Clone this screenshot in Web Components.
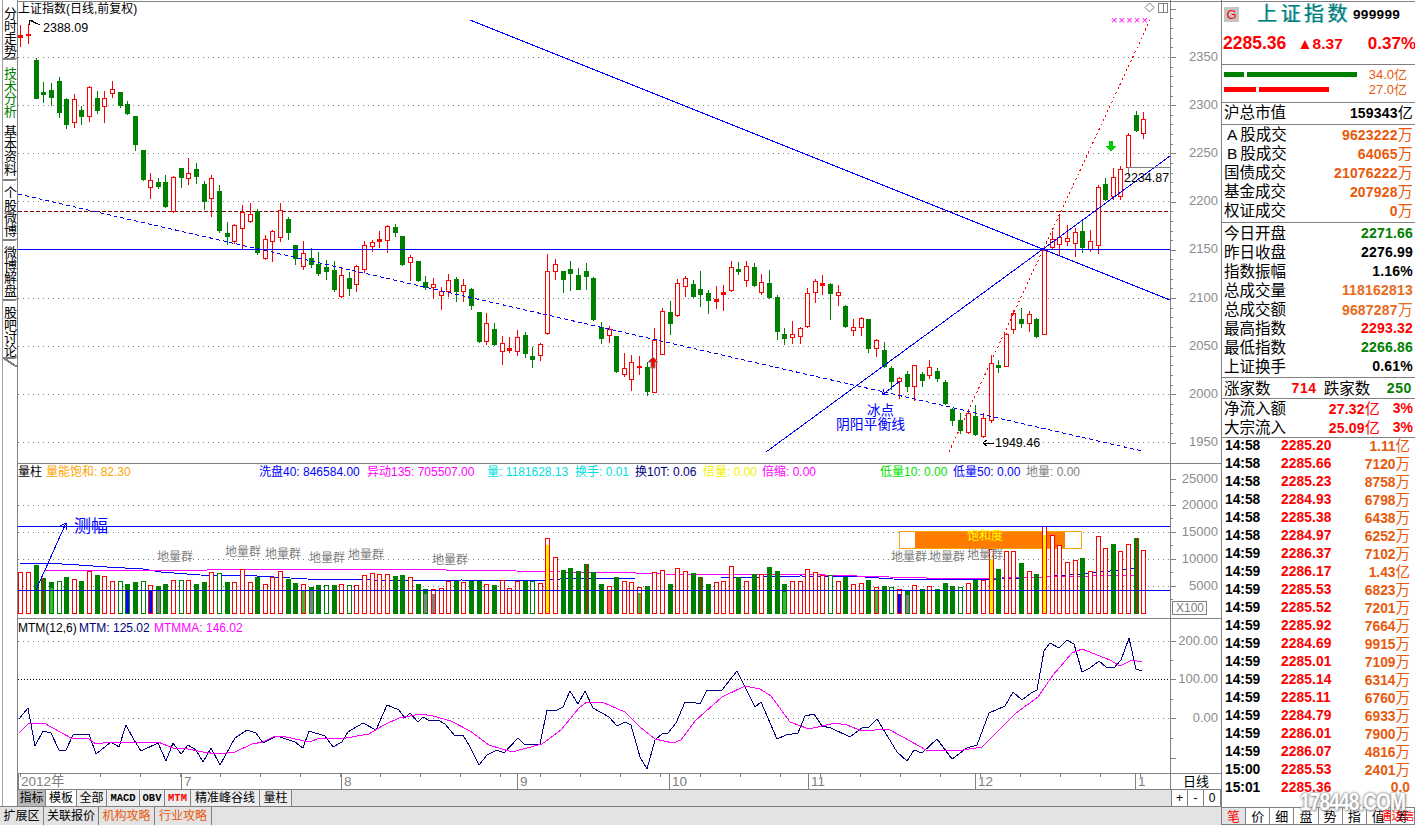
<!DOCTYPE html>
<html lang="zh">
<head>
<meta charset="utf-8">
<title>上证指数</title>
<style>
  html, body { margin: 0; padding: 0; background: #fff; }
</style>
</head>
<body>
<stock-app></stock-app>
<script>
const FONT = '"Liberation Sans", "Noto Sans CJK SC", sans-serif';
const GREY = '#808080';
const RED = '#ff0000';
const GREEN = '#008000';
const BLUE = '#0000ff';
const ORANGE = '#e8590c';

const barX = i => Math.round(20.3 + 7.64 * i);
const line = (x1, y1, x2, y2, color, extra = '') =>
  `<line x1="${x1}" y1="${y1}" x2="${x2}" y2="${y2}" stroke="${color}" ${extra}/>`;
const hLine = (y, color, extra = '', x1 = 18, x2 = 1170) => line(x1, y + 0.5, x2, y + 0.5, color, extra);
const dotted = y => hLine(y, GREY, 'stroke-dasharray="1 4"');
const rect = (x, y, w, h, color) => `<rect x="${x}" y="${y}" width="${w}" height="${h}" fill="${color}"/>`;
const polyline = (points, color) =>
  `<polyline fill="none" stroke="${color}" points="${points.map(p => p.join(',')).join(' ')}"/>`;

// color, wick top, body top, body bottom, wick bottom
const CANDLES = [
  ['r',25,35,37,46],['r',24,34,34,43],['g',58,60,98,98],['g',82,92,94,102],['g',83,90,97,105],['g',77,81,112,117],
  ['g',98,99,124,128],['r',94,99,122,127],['g',106,110,116,124],['r',86,87,116,121],['g',91,98,110,113],['r',91,98,106,122],
  ['r',81,89,93,97],['g',92,92,105,107],['g',101,104,113,114],['g',116,116,144,150],['g',150,150,179,180],['r',173,180,187,198],
  ['g',178,182,186,188],['g',175,182,206,207],['r',176,177,211,212],['g',168,168,177,187],['r',158,173,178,184],['g',163,169,176,183],
  ['g',181,184,201,209],['r',175,178,198,216],['g',185,191,230,232],['g',222,233,236,244],['r',224,225,241,243],['r',205,212,228,248],
  ['r',203,214,221,222],['g',209,211,252,254],['r',235,239,258,259],['r',230,231,241,261],['r',203,210,237,241],['g',217,219,232,239],
  ['g',245,245,258,264],['r',241,253,266,269],['g',248,258,264,267],['g',252,264,273,275],['g',260,267,271,279],['g',261,270,289,291],
  ['r',268,275,296,297],['g',272,278,288,295],['r',265,266,284,291],['r',241,245,269,272],['r',240,242,246,251],['r',231,239,241,247],
  ['r',225,226,240,252],['g',224,227,232,236],['g',236,236,264,265],['r',255,257,262,280],['g',261,261,280,281],['g',276,282,287,289],
  ['r',278,284,287,298],['r',287,291,295,309],['r',274,280,291,296],['g',277,279,291,301],['r',279,285,291,301],['g',288,289,305,309],
  ['g',312,312,341,342],['r',313,323,341,344],['g',323,329,344,345],['r',336,343,351,364],['r',337,348,350,352],['r',330,337,351,355],
  ['g',332,335,353,357],['g',347,356,359,367],['r',343,344,355,360],['r',254,271,333,334],['r',259,264,271,279],['g',271,271,279,292],
  ['g',261,269,273,290],['g',268,275,289,289],['g',263,271,276,289],['g',277,278,319,320],['g',322,327,338,343],['r',326,329,335,342],
  ['g',336,336,371,372],['r',353,368,374,376],['r',355,362,379,390],['r',356,366,366,374],['g',362,367,391,395],['r',328,340,392,392],
  ['r',308,311,354,354],['g',301,312,323,334],['r',279,283,315,316],['r',276,278,286,296],['g',280,284,296,297],['g',271,289,294,306],
  ['g',290,293,300,313],['r',286,299,301,308],['r',285,292,294,310],['r',261,267,290,291],['g',262,269,271,274],['r',261,266,280,286],
  ['g',263,267,285,286],['r',274,282,292,294],['g',270,283,297,298],['g',295,297,331,339],['g',328,334,338,344],['r',321,334,337,343],
  ['r',327,328,336,343],['r',288,293,326,327],['r',279,281,292,302],['r',275,283,285,294],['g',283,284,293,319],['r',285,292,295,305],
  ['g',305,306,326,327],['r',319,327,330,335],['r',317,318,327,335],['g',319,319,348,352],['r',339,340,348,356],['g',342,350,366,367],
  ['g',366,368,381,389],['r',377,378,381,398],['g',371,374,386,391],['r',365,365,386,400],['g',372,374,380,386],['r',360,367,375,378],
  ['g',368,371,378,381],['g',380,382,403,404],['g',408,409,420,425],['g',413,420,430,433],['r',412,413,432,433],['g',405,416,434,435],
  ['r',413,418,436,437],['r',355,363,420,422],['g',360,365,367,372],['r',333,334,366,366],['r',310,313,329,333],['g',308,319,323,327],
  ['r',311,314,323,331],['g',318,319,336,337],['r',250,250,334,334],['r',231,239,247,249],['r',216,237,244,254],['r',225,238,241,245],
  ['r',228,232,243,256],['g',220,231,247,252],['r',230,241,249,251],['r',185,187,245,253],['g',178,184,199,200],['r',168,177,196,199],
  ['r',166,169,196,199],['r',133,135,167,168],['g',111,115,130,131],['r',112,119,133,138]
];

// color, top, [inner fill, fill top]
const LIGHT = '#33bb33';
const VOLUMES = [
  ['r',572],['r',572],['g',565],['c',578],['g',582,LIGHT,588],['h',581],['g',577],['r',579],['g',581],['r',571],['g',575],['r',576],
  ['r',581],['h',581],['g',584,BLUE,590],['g',582],['h',581],['r',585,BLUE,590],['g',586,GREY,590],['g',584],['r',580],['h',580],['r',580],['g',584],
  ['g',582],['r',572],['h',573],['g',582],['r',582],['r',569],['r',582],['g',577],['r',584],['r',577],['r',571],['g',579],
  ['g',583],['r',584,LIGHT,590],['g',587,GREY,590],['g',585],['h',585],['g',585],['r',584],['h',585],['r',585],['r',575],['r',573],['r',574],
  ['r',574],['g',576],['g',575],['r',577],['g',584],['g',589,GREY,594],['r',589,GREY,594],['r',588],['r',581],['g',581],['r',582],['g',581],
  ['g',581],['r',584],['g',585],['r',580],['r',588],['r',581],['g',581],['h',581],['r',583],['r',538,'#ffee00',545],['r',557],['g',570],
  ['g',568],['g',571],['c',564],['g',572],['g',584],['r',586,'#ff6666',590],['g',577],['r',581],['r',582],['r',587,LIGHT,593],['g',586],['r',572],
  ['r',570],['g',584],['r',568],['r',571],['g',573],['c',577],['g',584],['r',582],['r',581],['r',566],['g',577],['r',581],
  ['g',574],['r',574],['g',567],['g',571],['g',584,LIGHT,592],['r',581],['r',581],['r',569],['r',572],['r',575],['h',575],['r',581],
  ['g',577],['r',584],['r',583],['g',580],['r',587,LIGHT,590],['g',586],['h',587],['r',589,BLUE,594],['g',591,GREY,595],['r',585],['g',589],['r',586],
  ['g',589],['g',583],['g',586],['h',587],['r',583],['g',580],['r',580],['r',549,'#ffee00',559],['g',569],['r',551],['r',551],['g',563],
  ['r',571],['g',574],['r',526,'#ffee00',535],['r',535],['r',545],['r',562],['r',560],['g',558],['r',571],['r',536],['r',548],['g',544],
  ['r',551],['r',544],['c',538],['r',550]
];

const MTM_LINE = [[25,313],[37,280],[47,392],[57,348],[68,353],[78,404],[88,405],[97,360],[118,357],[128,417],[148,380],[158,395],[168,330],[178,375],[188,408],[210,384],[220,437],[230,385],[240,417],[250,390],[260,405],[270,442],[280,400],[292,451],[312,368],[328,345],[340,355],[350,385],[368,362],[392,380],[403,400],[411,349],[432,364],[442,397],[455,382],[463,352],[482,325],[500,344],[514,270],[530,285],[538,310],[545,294],[555,320],[562,307],[572,317],[582,315],[592,326],[605,363],[615,360],[625,395],[636,449],[647,420],[660,405],[670,415],[688,370],[698,390],[717,388],[727,285],[740,284],[748,275],[757,228],[768,268],[778,228],[788,280],[810,305],[820,332],[830,322],[838,330],[850,425],[860,462],[870,375],[880,358],[888,353],[898,325],[910,260],[920,260],[930,268],[940,225],[960,226],[980,167],[1003,277],[1012,262],[1032,372],[1045,360],[1060,355],[1070,303],[1082,298],[1092,333],[1105,338],[1130,365],[1145,340],[1155,335],[1165,313],[1180,365],[1192,410],[1205,437],[1215,405],[1225,415],[1245,373],[1265,433],[1285,400],[1298,390],[1315,295],[1335,272],[1346,232],[1358,255],[1370,233],[1378,226],[1388,108],[1395,85],[1408,100],[1418,76],[1428,88],[1438,170],[1448,160],[1460,138],[1470,155],[1480,158],[1490,135],[1500,70],[1510,163],[1518,167]];
const MTMMA_LINE = [[25,355],[37,328],[58,325],[68,335],[95,370],[118,373],[128,386],[148,380],[158,382],[170,380],[210,380],[230,400],[250,402],[270,410],[290,418],[312,412],[335,387],[350,380],[365,363],[380,365],[410,380],[425,370],[445,372],[460,368],[490,358],[510,330],[530,308],[560,298],[575,302],[600,318],[625,348],[650,390],[680,412],[695,402],[720,388],[745,345],[770,280],[780,262],[800,262],[830,290],[850,335],[870,372],[895,385],[905,375],[925,315],[960,245],[990,212],[1010,222],[1025,242],[1050,320],[1075,343],[1110,325],[1125,330],[1145,347],[1180,343],[1200,365],[1230,405],[1280,406],[1305,397],[1350,295],[1380,245],[1400,180],[1425,115],[1438,103],[1475,135],[1488,152],[1505,135],[1518,140]];
const mtmPoint = ([x, y]) => [Math.round(x / 1.329), Math.round(615 + y / 3)];

class ChartPane extends HTMLElement {
  constructor() {
    super();
    this.attachShadow({ mode: 'open' });
  }

  static get styles() {
    return /* css */ `
      :host {
        display: block;
        position: relative;
        width: 1203px;
        overflow: hidden;
        background: #fff;
        font: 12px/14px ${FONT};
      }

      svg {
        display: block;
      }

      .legend {
        position: absolute;
        left: 0;
        display: flex;
        white-space: nowrap;
      }

      .legend span {
        flex: none;
      }

      .label {
        position: absolute;
        white-space: nowrap;
        transform: translateY(-50%);
      }

      .label.end {
        transform: translate(-100%, -50%);
      }
    `;
  }

  get top() { return 0; }
  get paneHeight() { return 0; }
  get legendTop() { return 2; }
  drawing() { return ''; }
  labels() { return []; }
  legend() { return []; }

  // ticks along the price axis: [y, major]
  axis(ticks) {
    return line(1170.5, this.top, 1170.5, this.top + this.paneHeight, GREY) +
      ticks.map(([y, major]) => hLine(y, GREY, '', 1170, major ? 1176 : 1173)).join('');
  }

  axisLabel(y, text) {
    return { x: 1218, y, text, color: '#8c8c8c', size: 13, end: true };
  }

  connectedCallback() {
    const labels = this.labels().map(l => {
      const style = `left:${l.x - 18}px;top:${l.y - this.top}px;color:${l.color};font-size:${l.size || 12}px;${l.extra || ''}`;
      return `<div class="label${l.end ? ' end' : ''}" style="${style}">${l.text}</div>`;
    }).join('');
    const legend = this.legend().map(([text, color, width]) =>
      `<span style="color:${color};${width ? `width:${width}px` : ''}">${text}</span>`).join('');
    this.style.height = `${this.paneHeight}px`;
    this.shadowRoot.innerHTML = /* html */ `
      <style>${ChartPane.styles}</style>
      <svg width="1203" height="${this.paneHeight}" viewBox="18 ${this.top} 1203 ${this.paneHeight}" shape-rendering="crispEdges">
        ${this.drawing()}
      </svg>
      <div class="legend" style="top:${this.legendTop}px">${legend}</div>
      ${labels}`;
  }
}

class KlineChart extends ChartPane {
  get top() { return 0; }
  get paneHeight() { return 463; }

  candle([kind, high, top, bottom, low], i) {
    const x = barX(i);
    const color = kind === 'r' ? RED : GREEN;
    let out = rect(x, high, 1, low - high + 1, color);
    const h = Math.max(bottom - top + 1, 2);
    out += rect(x - 2, top, 5, h, color);
    if (kind === 'r' && h > 3) out += rect(x - 1, top + 1, 3, h - 2, '#fff');
    return out;
  }

  drawing() {
    const levels = [57, 105, 153, 201, 298, 346, 394, 442];
    const ticks = [];
    for (let k = -5; k < 41; k++) {
      const y = Math.round(57 + k * 9.64);
      if (y > 4 && y < 462) ticks.push([y, k % 5 === 0]);
    }
    return [
      rect(18, 1, 1203, 1, GREY),
      ...levels.map(dotted),
      hLine(211, '#800000', 'stroke-dasharray="4 2"'),
      ...CANDLES.map((c, i) => this.candle(c, i)),
      hLine(249, BLUE),
      line(470, 20, 1170, 300, BLUE),
      line(766, 452, 1170, 156, BLUE),
      line(18, 194, 1142, 451, BLUE, 'stroke-dasharray="4 3"'),
      line(949, 452, 1150, 20, RED, 'stroke-dasharray="2 3"'),
      line(900, 381, 882, 395, BLUE),
      `<path d="M882 395l6-1M882 395l2-6" fill="none" stroke="${BLUE}"/>`,
      // price marks
      `<path d="M29 20l11 5M29 20v5M29 20h4" fill="none" stroke="#000"/>`,
      `<path d="M983 443h11M983 443l4-3M983 443l4 3" fill="none" stroke="#000"/>`,
      hLine(167, GREY, '', 1128, 1170),
      line(1128.5, 167, 1128.5, 176, GREY),
      // signal arrows
      `<path d="M653 357l5 5h-3v6h-4v-6h-3z" fill="${RED}" stroke="${GREY}" stroke-width="1" shape-rendering="auto"/>`,
      `<path d="M1109 141h4v5h3l-5 6-5-6h3z" fill="#00cc00"/>`,
      // corner buttons
      `<path d="M1149.5 3l4.5 4.5-4.5 4.5-4.5-4.5z" fill="#fff" stroke="${GREY}" shape-rendering="auto"/>`,
      `<rect x="1158.5" y="3.5" width="9" height="9" fill="#fff" stroke="${GREY}"/>`,
      line(1163.5, 3, 1163.5, 13, GREY),
      this.axis(ticks)
    ].join('');
  }

  labels() {
    return [
      { x: 18, y: 9, text: '上证指数(日线,前复权)', color: '#000', size: 12 },
      { x: 43, y: 28, text: '2388.09', color: '#000', size: 12.5 },
      { x: 1111, y: 20, text: '×××××', color: '#ff00ff', size: 11, extra: 'letter-spacing:1.2px' },
      { x: 867, y: 411, text: '冰点', color: BLUE, size: 13.5 },
      { x: 836, y: 425, text: '阴阳平衡线', color: BLUE, size: 13.8 },
      { x: 995, y: 443, text: '1949.46', color: '#000', size: 12.5 },
      { x: 1124, y: 178, text: '2234.87', color: '#000', size: 12.5 },
      ...[[57, 2350], [105, 2300], [153, 2250], [201, 2200], [249, 2150], [298, 2100], [346, 2050], [394, 2000], [442, 1950]]
        .map(([y, text]) => this.axisLabel(y, text))
    ];
  }
}

class VolumeChart extends ChartPane {
  get top() { return 463; }
  get paneHeight() { return 155; }

  bar([kind, top, fill, fillTop], i) {
    const x = barX(i);
    const bottom = 614;
    const color = kind === 'r' ? RED : GREEN;
    const h = bottom - top;
    let out = rect(x - 2, top, 5, h, color);
    if (kind === 'r' || kind === 'h') out += rect(x - 1, top + 1, 3, h - 2, '#fff');
    if (kind === 'c') out += rect(x, top, 1, h, RED);
    if (fill) out += rect(x - 1, fillTop, 3, bottom - fillTop - 1, fill);
    return out;
  }

  drawing() {
    const blue = [[20,564],[44,563],[62,564],[79,565],[107,567],[143,569],[161,572],[200,575],[257,576],[307,579],[371,580],[437,581],[461,580],[514,581],[545,580],[560,579],[636,578],[721,578],[801,576],[865,577],[893,579],[962,580],[1002,579],[1042,577],[1082,574],[1138,568]];
    const pink = [[44,570],[207,570],[209,569],[445,569],[446,570],[514,570],[516,571],[560,572],[636,573],[664,574],[825,575],[889,577],[962,579],[1002,578],[1138,575]];
    const ticks = [479, 492, 505, 518, 532, 545, 559, 572, 586, 599].map((y, i) => [y, i % 2 === 0]);
    return [
      rect(18, 463, 1203, 1, GREY),
      ...[505, 532, 559, 586].map(dotted),
      `<rect x="899.5" y="531.5" width="182" height="17" fill="#fff" stroke="#ffa500"/>`,
      rect(915, 532, 150, 16, '#ff7b00'),
      polyline(blue, BLUE),
      polyline(pink, '#ff00ff'),
      ...VOLUMES.map((v, i) => this.bar(v, i)),
      hLine(526, BLUE),
      hLine(590, BLUE),
      line(36, 590, 66, 523, BLUE),
      `<path d="M66 523l-6 3M66 523l1 7" fill="none" stroke="${BLUE}"/>`,
      `<rect x="1172.5" y="601.5" width="34" height="13" fill="#fff" stroke="${GREY}"/>`,
      this.axis(ticks)
    ].join('');
  }

  legend() {
    return [
      ['量柱', '#000', 28],
      ['量能饱和: 82.30', '#ffa500', 213],
      ['洗盘40: 846584.00', BLUE, 108],
      ['异动135: 705507.00', '#ff00ff', 120],
      ['量: 1181628.13', '#00e0e0', 88],
      ['换手: 0.01', '#00e0e0', 60],
      ['换10T: 0.06', '#000080', 68],
      ['倍量: 0.00', '#f0f000', 59],
      ['倍缩: 0.00', '#ff00ff', 118],
      ['低量10: 0.00', '#00e000', 73],
      ['低量50: 0.00', BLUE, 73],
      ['地量: 0.00', GREY]
    ];
  }

  labels() {
    const ground = [[175, 557], [243, 552], [283, 554], [327, 558], [366, 555], [450, 560], [909, 557], [947, 557], [985, 555]];
    return [
      { x: 74, y: 527, text: '测幅', color: BLUE, size: 17 },
      ...ground.map(([x, y]) => ({ x: x - 18, y, text: '地量群', color: GREY, size: 12 })),
      { x: 967, y: 536, text: '饱和度', color: '#ffff00', size: 12 },
      { x: 1176, y: 608, text: 'X100', color: GREY, size: 12 },
      ...[[479, 25000], [505, 20000], [532, 15000], [559, 10000], [586, 5000]].map(([y, text]) => this.axisLabel(y, text))
    ];
  }
}

class MtmChart extends ChartPane {
  get top() { return 618; }
  get paneHeight() { return 155; }
  get legendTop() { return 3; }

  drawing() {
    const ticks = [[641, 1], [660, 0], [679, 1], [699, 0], [718, 1], [738, 0], [758, 1]];
    return [
      rect(18, 618, 1203, 1, GREY),
      dotted(641),
      hLine(679, '#000', 'stroke-dasharray="1 2"'),
      dotted(718),
      polyline(MTM_LINE.map(mtmPoint), '#000080'),
      polyline(MTMMA_LINE.map(mtmPoint), '#ff00ff'),
      this.axis(ticks)
    ].join('');
  }

  legend() {
    return [
      ['MTM(12,6)', '#000', 61],
      ['MTM: 125.02', '#000080', 75],
      ['MTMMA: 146.02', '#ff00ff']
    ];
  }

  labels() {
    return [[641, '200.00'], [679, '100.00'], [718, '0.00']].map(([y, text]) => this.axisLabel(y, text));
  }
}

class TimeAxis extends HTMLElement {
  constructor() {
    super();
    this.attachShadow({ mode: 'open' });
  }

  static get styles() {
    return /* css */ `
      :host {
        display: flex;
        height: 15px;
        border-top: 1px solid ${GREY};
        box-sizing: content-box;
        font: 13.5px/16px ${FONT};
        color: ${GREY};
      }

      .months {
        width: 1152px;
        display: flex;
        background: repeating-linear-gradient(90deg, ${GREY} 0 1px, transparent 1px 40px) 2px 0 / 100% 3px no-repeat;
      }

      .month {
        flex: none;
        box-sizing: border-box;
        border-left: 1px solid ${GREY};
        padding-left: 2px;
      }

      .period {
        width: 51px;
        box-sizing: border-box;
        border-left: 1px solid ${GREY};
        color: #000;
        text-align: center;
        font-size: 13px;
      }
    `;
  }

  connectedCallback() {
    const months = [['2012年', 163], ['7', 160], ['8', 176], ['9', 152], ['10', 139], ['11', 167], ['12', 160], ['1', 35]];
    this.shadowRoot.innerHTML = /* html */ `
      <style>${TimeAxis.styles}</style>
      <div class="months">
        ${months.map(([text, width]) => `<div class="month" style="width:${width}px">${text}</div>`).join('')}
      </div>
      <div class="period">日线</div>`;
  }
}

class TabStrip extends HTMLElement {
  constructor() {
    super();
    this.attachShadow({ mode: 'open' });
  }

  connectedCallback() {
    this.shadowRoot.innerHTML = /* html */ `
      <style>
        :host {
          display: flex;
          flex: none;
          background: #e3e3e3;
          border-top: 1px solid ${GREY};
          box-sizing: border-box;
          font: 12px/1 ${FONT};
          color: #000;
        }
      </style>
      <slot></slot>`;
  }
}

class StripTab extends HTMLElement {
  constructor() {
    super();
    this.attachShadow({ mode: 'open' });
  }

  connectedCallback() {
    this.shadowRoot.innerHTML = /* html */ `
      <style>
        :host {
          flex: none;
          box-sizing: border-box;
          display: flex;
          align-items: center;
          justify-content: center;
          border-right: 1px solid ${GREY};
          white-space: nowrap;
        }
      </style>
      <slot></slot>`;
  }
}

class SideRail extends HTMLElement {
  constructor() {
    super();
    this.attachShadow({ mode: 'open' });
  }

  static get styles() {
    return /* css */ `
      :host {
        display: block;
        flex: none;
        position: relative;
        box-sizing: border-box;
        width: 16px;
        height: 806px;
        padding-top: 2px;
        border-left: 1px solid #a0a0a0;
        border-right: 1px solid ${GREY};
        margin-left: 2px;
        background: #fff;
        font: 13px/13px ${FONT};
      }

      .tab {
        position: relative;
        box-sizing: border-box;
        width: 14px;
        writing-mode: vertical-rl;
        letter-spacing: -.5px;
        padding: 5px 1px 0 0;
        border-bottom: 2px solid ${GREY};
        border-bottom-right-radius: 3px;
        color: #000;
        background: #fff;
      }

      .tab.on {
        color: ${GREEN};
        border-bottom-color: transparent;
        padding-top: 7px;
      }

      .tab.last::after {
        content: "";
        position: absolute;
        left: 0;
        right: 0;
        bottom: -10px;
        height: 9px;
        background: linear-gradient(to top right, transparent 44%, ${GREY} 44%, ${GREY} 58%, transparent 58%);
      }
    `;
  }

  connectedCallback() {
    const tabs = [['分时走势', 58], ['技术分析', 60, 'on'], ['基本资料', 61], ['个股微博', 60], ['微博解盘', 60], ['股吧讨论', 58, 'last']];
    this.shadowRoot.innerHTML = /* html */ `
      <style>${SideRail.styles}</style>
      ${tabs.map(([text, h, cls]) => `<div class="tab ${cls || ''}" style="height:${h}px">${text}</div>`).join('')}`;
  }
}

class QuoteRow extends HTMLElement {
  constructor() {
    super();
    this.attachShadow({ mode: 'open' });
  }

  static get styles() {
    return /* css */ `
      :host {
        display: flex;
        align-items: center;
        height: 19px;
        padding: 0 2px 0 2px;
        font-size: 15.5px;
        line-height: 19px;
        color: #000;
        white-space: nowrap;
      }

      .value {
        margin-left: auto;
        font-size: 14px;
        font-weight: bold;
        letter-spacing: .2px;
      }

      .unit {
        font-weight: normal;
        font-size: 15px;
      }

      .tail {
        width: 33px;
        text-align: right;
        font-size: 14px;
        font-weight: bold;
      }
    `;
  }

  connectedCallback() {
    const color = this.getAttribute('color') || '#000';
    const unit = this.getAttribute('unit');
    const tail = this.getAttribute('tail');
    this.shadowRoot.innerHTML = /* html */ `
      <style>${QuoteRow.styles}</style>
      <slot></slot>
      <span class="value" style="color:${color}">${this.getAttribute('value')}${unit ? `<span class="unit">${unit}</span>` : ''}</span>
      ${tail ? `<span class="tail" style="color:${color}">${tail}</span>` : ''}`;
  }
}

class TickRow extends HTMLElement {
  constructor() {
    super();
    this.attachShadow({ mode: 'open' });
  }

  static get styles() {
    return /* css */ `
      :host {
        display: flex;
        height: 18px;
        line-height: 18px;
        padding: 0 5px 0 3px;
        font-size: 13.8px;
        font-weight: bold;
        white-space: nowrap;
      }

      .time { width: 56px; color: #000; }
      .price { color: ${RED}; letter-spacing: .1px; }
      .vol { margin-left: auto; color: ${ORANGE}; }
      .unit { font-weight: normal; font-size: 14.5px; }
    `;
  }

  connectedCallback() {
    const unit = this.getAttribute('unit');
    this.shadowRoot.innerHTML = /* html */ `
      <style>${TickRow.styles}</style>
      <span class="time">${this.getAttribute('time')}</span>
      <span class="price">${this.getAttribute('price')}</span>
      <span class="vol">${this.getAttribute('vol')}${unit ? `<span class="unit">${unit}</span>` : ''}</span>`;
  }
}

class QuotePanel extends HTMLElement {
  constructor() {
    super();
    this.attachShadow({ mode: 'open' });
  }

  static get styles() {
    return /* css */ `
      :host {
        display: flex;
        flex-direction: column;
        position: relative;
        flex: none;
        box-sizing: border-box;
        width: 194px;
        height: 825px;
        border-left: 1px solid ${GREY};
        background: #fff;
        overflow: hidden;
        font: 15.5px/19px ${FONT};
      }

      section {
        flex: none;
        box-sizing: border-box;
        border-bottom: 1px solid ${GREY};
      }

      .head {
        height: 64px;
        border-top: 1px solid ${GREY};
        margin-top: 1px;
        padding: 4px 0 0 2px;
      }

      .name {
        display: flex;
        align-items: center;
        height: 16px;
      }

      .logo {
        width: 15px;
        height: 15px;
        background: #c4c4c4;
        color: ${RED};
        font: 13px/15px "Liberation Sans", sans-serif;
        text-align: center;
      }

      .title {
        margin-left: 18px;
        width: 96px;
        color: #007c7c;
        font-size: 20px;
        line-height: 20px;
        letter-spacing: 3.4px;
        text-shadow: 1px 0 0 #8cc;
      }

      .code {
        font-size: 13.6px;
        font-weight: bold;
        letter-spacing: .3px;
      }

      .now {
        display: flex;
        align-items: center;
        margin-top: 11px;
        margin-left: -1px;
        height: 20px;
        color: ${RED};
        font-size: 17.5px;
        font-weight: bold;
        white-space: nowrap;
      }

      .now .up { margin-left: 11px; font-size: 15.5px; }
      .now .pct { margin-left: auto; margin-right: -1px; font-weight: bold; font-size: 17px; }

      .flow {
        height: 38px;
        padding: 2px 8px 0 2px;
      }

      .flow-row {
        display: flex;
        align-items: center;
        gap: 3px;
        height: 15px;
        color: ${ORANGE};
        font-size: 13px;
      }

      .flow-row i {
        display: block;
        flex: none;
        height: 5px;
      }

      .flow-row span {
        margin-left: auto;
      }

      .mkt { height: 22px; }
      .five { height: 98px; }
      .eight { height: 155px; padding-top: 1px; }

      .ratio {
        height: 21px;
        display: flex;
        align-items: center;
        padding: 0 3px 0 2px;
        white-space: nowrap;
        font-size: 15.5px;
      }

      .ratio b { font-size: 14px; letter-spacing: .6px; }
      .cash { height: 39px; }

      .ticks {
        border: 0;
        margin-top: -1px;
        height: 369px;
      }

      .tabs {
        margin-top: auto;
        height: 18px;
        display: flex;
        background: #fff;
        border-top: 1px solid ${GREY};
        font-size: 13px;
        line-height: 17px;
        text-align: center;
      }

      .tabs div {
        flex: 1;
        border-right: 1px solid ${GREY};
      }

      .tabs div:first-child {
        color: ${RED};
        background: #e3e3e3;
      }

      .brand {
        position: absolute;
        left: 158px;
        top: 807px;
        color: ${RED};
        font-size: 11.5px;
        line-height: 18px;
        white-space: nowrap;
      }

      .mark {
        position: absolute;
        left: 78px;
        top: 790px;
        color: #fff;
        font-size: 19px;
        line-height: 24px;
        font-weight: bold;
        letter-spacing: -.8px;
        white-space: nowrap;
        text-shadow: 0 0 2px #888, 0 0 3px #aaa, 1px 1px 2px #999;
        transform: scaleY(1.25);
      }
    `;
  }

  connectedCallback() {
    const row = ([label, value, color, unit]) =>
      `<quote-row value="${value}" color="${color}" ${unit ? `unit="${unit}"` : ''}>${label}</quote-row>`;
    const five = [
      ['<span style="padding:0 3px">A</span>股成交', '9623222', ORANGE, '万'],
      ['<span style="padding:0 3px">B</span>股成交', '64065', ORANGE, '万'],
      ['国债成交', '21076222', ORANGE, '万'],
      ['基金成交', '207928', ORANGE, '万'],
      ['权证成交', '0', ORANGE, '万']
    ];
    const eight = [
      ['今日开盘', '2271.66', GREEN],
      ['昨日收盘', '2276.99', '#000'],
      ['指数振幅', '1.16%', '#000'],
      ['总成交量', '118162813', '#e86a1c'],
      ['总成交额', '9687287', '#e86a1c', '万'],
      ['最高指数', '2293.32', RED],
      ['最低指数', '2266.86', GREEN],
      ['上证换手', '0.61%', '#000']
    ];
    const ticks = [
      ['14:58','2285.20','1.11','亿'],['14:58','2285.66','7120','万'],['14:58','2285.23','8758','万'],['14:58','2284.93','6798','万'],
      ['14:58','2285.38','6438','万'],['14:58','2284.97','6252','万'],['14:59','2286.37','7102','万'],['14:59','2286.17','1.43','亿'],
      ['14:59','2285.53','6823','万'],['14:59','2285.52','7201','万'],['14:59','2285.92','7664','万'],['14:59','2284.69','9915','万'],
      ['14:59','2285.01','7109','万'],['14:59','2285.14','6314','万'],['14:59','2285.11','6760','万'],['14:59','2284.79','6933','万'],
      ['14:59','2286.01','7900','万'],['14:59','2286.07','4816','万'],['15:00','2285.53','2401','万'],['15:01','2285.36','0.0','']
    ];
    this.shadowRoot.innerHTML = /* html */ `
      <style>${QuotePanel.styles}</style>
      <section class="head">
        <div class="name">
          <div class="logo">G</div>
          <div class="title">上证指数</div>
          <div class="code">999999</div>
        </div>
        <div class="now">
          <span>2285.36</span>
          <span class="up">▲8.37</span>
          <span class="pct">0.37%</span>
        </div>
      </section>
      <section class="flow">
        <div class="flow-row">
          <i style="width:20px;background:${GREEN}"></i><i style="width:110px;background:${GREEN}"></i><span>34.0亿</span>
        </div>
        <div class="flow-row">
          <i style="width:32px;background:${RED}"></i><i style="width:70px;background:${RED}"></i><span>27.0亿</span>
        </div>
      </section>
      <section class="mkt">${row(['沪总市值', '159343', '#000', '亿'])}</section>
      <section class="five">${five.map(row).join('')}</section>
      <section class="eight">${eight.map(row).join('')}</section>
      <section class="ratio">
        涨家数<b style="color:${RED};margin:0 7px 0 21px">714</b>跌家数<b style="color:${GREEN};margin-left:auto">250</b>
      </section>
      <section class="cash">
        <quote-row value="27.32" unit="亿" color="${RED}" tail="3%">净流入额</quote-row>
        <quote-row value="25.09" unit="亿" color="${RED}" tail="3%">大宗流入</quote-row>
      </section>
      <section class="ticks">
        ${ticks.map(([time, price, vol, unit]) =>
          `<tick-row time="${time}" price="${price}" vol="${vol}" ${unit ? `unit="${unit}"` : ''}></tick-row>`).join('')}
      </section>
      <section class="tabs">
        ${['笔', '价', '细', '盘', '势', '指', '值', '筹'].map(t => `<div>${t}</div>`).join('')}
      </section>
      <div class="mark">178448.COM</div>
      <div class="brand">通达信</div>`;
  }
}

class StockApp extends HTMLElement {
  constructor() {
    super();
    this.attachShadow({ mode: 'open' });
  }

  static get styles() {
    return /* css */ `
      :host {
        display: flex;
        width: 1415px;
        height: 825px;
        overflow: hidden;
        background: #fff;
        font: 13px/1 ${FONT};
      }

      .left {
        width: 1221px;
        flex: none;
        display: flex;
        flex-direction: column;
      }

      .main {
        display: flex;
        height: 806px;
      }

      .panes {
        width: 1203px;
        flex: none;
        display: flex;
        flex-direction: column;
      }

      .mono {
        font: bold 10.5px "Liberation Mono", monospace;
      }
    `;
  }

  connectedCallback() {
    this.shadowRoot.innerHTML = /* html */ `
      <style>${StockApp.styles}</style>
      <div class="left">
        <div class="main">
          <side-rail></side-rail>
          <div class="panes">
            <kline-chart></kline-chart>
            <volume-chart></volume-chart>
            <mtm-chart></mtm-chart>
            <time-axis></time-axis>
            <tab-strip style="height:17px">
              <strip-tab style="width:28px;background:#b8b8b8">指标</strip-tab>
              <strip-tab style="width:31px;background:#fff">模板</strip-tab>
              <strip-tab style="width:30px;background:#eee">全部</strip-tab>
              <strip-tab class="mono" style="width:33px;background:#eee">MACD</strip-tab>
              <strip-tab class="mono" style="width:25px;background:#eee">OBV</strip-tab>
              <strip-tab class="mono" style="width:26px;background:#eee;color:${RED}">MTM</strip-tab>
              <strip-tab style="width:69px;background:#eee">精准峰谷线</strip-tab>
              <strip-tab style="width:32px;background:#eee">量柱</strip-tab>
              <div style="flex:1"></div>
              <strip-tab style="width:17px;background:#fff;border-left:1px solid ${GREY}">+</strip-tab>
              <strip-tab style="width:16px;background:#fff">-</strip-tab>
              <strip-tab style="width:17px;background:#fff">0</strip-tab>
            </tab-strip>
          </div>
        </div>
        <tab-strip style="height:19px">
          <strip-tab style="width:44px">扩展区</strip-tab>
          <strip-tab style="width:55px">关联报价</strip-tab>
          <strip-tab style="width:56px;color:${ORANGE}">机构攻略</strip-tab>
          <strip-tab style="width:57px;color:${ORANGE}">行业攻略</strip-tab>
        </tab-strip>
      </div>
      <quote-panel></quote-panel>`;
  }
}

customElements.define('kline-chart', KlineChart);
customElements.define('volume-chart', VolumeChart);
customElements.define('mtm-chart', MtmChart);
customElements.define('time-axis', TimeAxis);
customElements.define('tab-strip', TabStrip);
customElements.define('strip-tab', StripTab);
customElements.define('side-rail', SideRail);
customElements.define('quote-row', QuoteRow);
customElements.define('tick-row', TickRow);
customElements.define('quote-panel', QuotePanel);
customElements.define('stock-app', StockApp);
</script>
</body>
</html>
